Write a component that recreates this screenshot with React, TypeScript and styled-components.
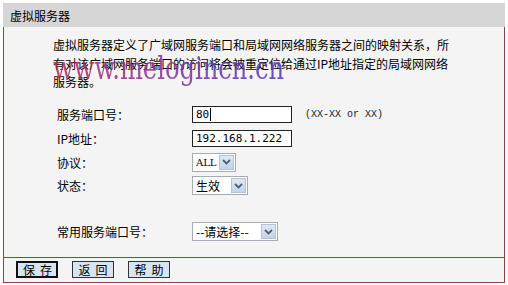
import React from "react";
import styled, { createGlobalStyle } from "styled-components";

const GlobalStyle = createGlobalStyle`
  body {
    margin: 0;
    background: #ffffff;
    font-family: "Noto Sans CJK SC", "DejaVu Sans", sans-serif;
    font-size: 12px;
    color: #000;
  }
`;

const Panel = styled.div`
  width: 502px;
  margin: 3px 0 0 3px;
  position: relative;
`;

const Header = styled.div`
  height: 24px;
  background: #d6d6d6;
  display: flex;
  align-items: center;
  padding-left: 7px;
  font-size: 12px;
`;

const Body = styled.div`
  border-left: 1px solid #8b4444;
  border-right: 1px solid #8b4444;
  background: #f4f4f4;
  padding: 9px 0 13px 49px;
`;

const Intro = styled.p`
  margin: 0;
  width: 402px;
  line-height: 18.5px;
  font-size: 12px;
`;

const Watermark = styled.div`
  position: absolute;
  left: 50px;
  top: 45px;
  font-family: "DejaVu Serif", serif;
  font-size: 31px;
  line-height: 40px;
  white-space: nowrap;
  transform: scaleX(0.78);
  transform-origin: left center;
  background: linear-gradient(90deg, #b02a5a 0%, #8a2f9a 45%, #4a35c0 100%);
  -webkit-background-clip: text;
  background-clip: text;
  color: transparent;
  opacity: 0.85;
  pointer-events: none;
`;

const Form = styled.div`
  margin-top: 11px;
  display: flex;
  flex-direction: column;
`;

const Row = styled.div<{ $h: number; $gapTop?: number }>`
  display: flex;
  align-items: center;
  height: ${(p) => p.$h}px;
  margin-top: ${(p) => p.$gapTop ?? 0}px;
`;

const Label = styled.div`
  width: 139px;
  padding-left: 4px;
  box-sizing: border-box;
`;

const TextInput = styled.div`
  width: 100px;
  height: 17px;
  box-sizing: border-box;
  border: 1px solid #222;
  background: #fff;
  font-family: "DejaVu Sans Mono", monospace;
  font-size: 11px;
  padding-left: 3px;
  display: flex;
  align-items: center;
`;

const Caret = styled.span`
  display: inline-block;
  width: 1px;
  height: 13px;
  background: #000;
  margin-left: 1px;
`;

const Hint = styled.span`
  margin-left: 13px;
  font-family: "Liberation Mono", monospace;
  font-size: 10px;
  color: #222;
`;

const Select = styled.div<{ $w: number }>`
  width: ${(p) => p.$w}px;
  height: 19px;
  box-sizing: border-box;
  border: 1px solid #a5acb5;
  background: #fff;
  display: flex;
  align-items: center;
  justify-content: space-between;
`;

const SelectText = styled.span<{ $serif?: boolean }>`
  padding-left: 3px;
  font-family: ${(p) =>
    p.$serif ? `"DejaVu Serif", serif` : `"Noto Sans CJK SC", sans-serif`};
  font-size: ${(p) => (p.$serif ? 10 : 12)}px;
`;

const ArrowBox = styled.span`
  width: 15px;
  height: 15px;
  margin-right: 1px;
  box-sizing: border-box;
  border: 1px solid #b3c2d6;
  background: linear-gradient(#dfe8f4, #c3d3e8);
  display: flex;
  align-items: center;
  justify-content: center;
`;

const Footer = styled.div`
  border: 1px solid #8b4444;
  background: #f4f4f4;
  height: 24px;
  display: flex;
  align-items: center;
  gap: 14px;
  padding-left: 12px;
`;

const Button = styled.button<{ $focus?: boolean }>`
  width: 42px;
  height: 17px;
  box-sizing: border-box;
  padding: 0 0 0 5px;
  white-space: nowrap;
  background: #d7e4f2;
  border: ${(p) => (p.$focus ? "2px solid #111" : "1px solid #333")};
  font-family: "Noto Sans CJK SC", sans-serif;
  font-size: 12px;
  letter-spacing: 5px;
  line-height: 13px;
  color: #000;
`;

const Arrow = () => (
  <svg width="9" height="6" viewBox="0 0 9 6">
    <path d="M1 1 L4.5 4.5 L8 1" fill="none" stroke="#4d5f7a" strokeWidth="1.8" />
  </svg>
);

const Dropdown: React.FC<{ w: number; text: string; serif?: boolean }> = ({ w, text, serif }) => (
  <Select $w={w}>
    <SelectText $serif={serif}>{text}</SelectText>
    <ArrowBox>
      <Arrow />
    </ArrowBox>
  </Select>
);

export default function App() {
  return (
    <>
      <GlobalStyle />
      <Panel>
        <Header>虚拟服务器</Header>
        <Body>
          <Intro>
            虚拟服务器定义了广域网服务端口和局域网网络服务器之间的映射关系，所有对该广域网服务端口的访问将会被重定位给通过IP地址指定的局域网网络服务器。
          </Intro>
          <Form>
            <Row $h={24}>
              <Label>服务端口号：</Label>
              <TextInput>
                80<Caret />
              </TextInput>
              <Hint>(XX-XX or XX)</Hint>
            </Row>
            <Row $h={24}>
              <Label>IP地址：</Label>
              <TextInput>192.168.1.222</TextInput>
            </Row>
            <Row $h={23}>
              <Label>协议：</Label>
              <Dropdown w={44} text="ALL" serif />
            </Row>
            <Row $h={24}>
              <Label>状态：</Label>
              <Dropdown w={56} text="生效" />
            </Row>
            <Row $h={24} $gapTop={22}>
              <Label>常用服务端口号：</Label>
              <Dropdown w={86} text="--请选择--" />
            </Row>
          </Form>
        </Body>
        <Footer>
          <Button $focus>保存</Button>
          <Button>返回</Button>
          <Button>帮助</Button>
        </Footer>
        <Watermark>www.melogincn.cn</Watermark>
      </Panel>
    </>
  );
}
